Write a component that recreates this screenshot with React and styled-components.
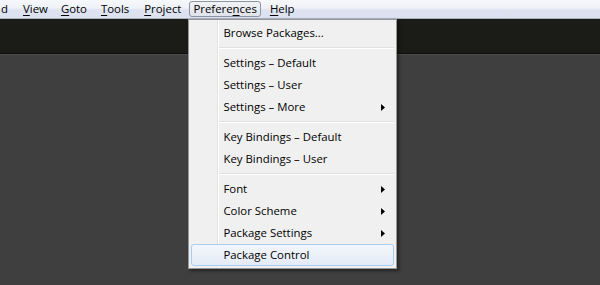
import React from "react";
import styled, { createGlobalStyle } from "styled-components";

const GlobalStyle = createGlobalStyle`
  html, body {
    margin: 0;
    padding: 0;
    overflow: hidden;
    background: #3e3e3e;
  }
  body {
    font-family: "Segoe UI", "Open Sans", "Noto Sans", sans-serif;
    font-size: 11.4px;
    color: #000;
  }
`;

const Window = styled.div`
  display: flex;
  flex-direction: column;
  width: 600px;
  height: 285px;
`;

const MenuBar = styled.div`
  position: relative;
  z-index: 2;
  display: flex;
  align-items: stretch;
  height: 19px;
  box-sizing: border-box;
  padding: 1px 0 1px 0;
  background: linear-gradient(#f7f8fb 0%, #eef1f7 45%, #dde3f0 55%, #dbe1ef 100%);
  border-bottom: 1px solid #a9b1c2;
`;

const MenuItem = styled.div`
  position: relative;
  display: flex;
  align-items: center;
  box-sizing: border-box;
  padding: 0 ${(p) => p.$pad ?? 5}px;
  margin-left: ${(p) => p.$gap ?? 1}px;
  border: 1px solid ${(p) => (p.$open ? "#8d95a3" : "transparent")};
  border-radius: 3px;
  background: ${(p) =>
    p.$open ? "linear-gradient(#f1f2f5, #dfe3ea)" : "transparent"};
  line-height: 14px;
  white-space: nowrap;
`;

const Key = styled.span`
  text-decoration: underline;
  text-underline-offset: 2px;
`;

const Toolbar = styled.div`
  height: 34px;
  background: #1b1c17;
  border-bottom: 1px solid #0e0e0c;
`;

const Editor = styled.div`
  flex: 1;
  background: #3f3f3f;
  border-top: 1px solid #4d4d4d;
`;

const Dropdown = styled.div`
  position: absolute;
  left: -2px;
  top: 17px;
  width: 209px;
  box-sizing: border-box;
  padding: 2px;
  border: 1px solid #979797;
  background: linear-gradient(
      to right,
      transparent 28px,
      #e2e3e3 28px,
      #e2e3e3 29px,
      #ffffff 29px,
      #ffffff 30px,
      transparent 30px
    ),
    #f0f0f0;
  box-shadow: 2px 2px 3px rgba(0, 0, 0, 0.45);
`;

const DropItem = styled.div`
  display: flex;
  align-items: center;
  justify-content: space-between;
  height: 22px;
  box-sizing: border-box;
  padding: 0 8px 0 31px;
  border: 1px solid ${(p) => (p.$active ? "#a9cdf3" : "transparent")};
  border-radius: 3px;
  background: ${(p) =>
    p.$active ? "linear-gradient(#f2f6fc, #e4ebf6)" : "transparent"};
  white-space: nowrap;
`;

const Separator = styled.div`
  height: 8px;
  margin-left: 28px;
  display: flex;
  flex-direction: column;
  justify-content: center;
  &::after {
    content: "";
    display: block;
    height: 1px;
    background: #e0e0e0;
    border-bottom: 1px solid #ffffff;
  }
`;

const Arrow = () => (
  <svg width="4" height="7" viewBox="0 0 4 7">
    <polygon points="0,0 4,3.5 0,7" fill="#000" />
  </svg>
);

const items = [
  { label: "Browse Packages..." },
  "sep",
  { label: "Settings \u2013 Default" },
  { label: "Settings \u2013 User" },
  { label: "Settings \u2013 More", sub: true },
  "sep",
  { label: "Key Bindings \u2013 Default" },
  { label: "Key Bindings \u2013 User" },
  "sep",
  { label: "Font", sub: true },
  { label: "Color Scheme", sub: true },
  { label: "Package Settings", sub: true },
  { label: "Package Control", active: true },
];

const App = () => {
  return (
    <Window>
      <GlobalStyle />
      <MenuBar>
        <MenuItem $pad={0} $gap={0}>d</MenuItem>
        <MenuItem $gap={8}>
          <Key>V</Key>iew
        </MenuItem>
        <MenuItem>
          <Key>G</Key>oto
        </MenuItem>
        <MenuItem $gap={2}>
          <Key>T</Key>ools
        </MenuItem>
        <MenuItem $gap={3}>
          <Key>P</Key>roject
        </MenuItem>
        <MenuItem $gap={2} $pad={3} $open>
          Prefere<Key>n</Key>ces
          <Dropdown>
            {items.map((it, i) =>
              it === "sep" ? (
                <Separator key={i} />
              ) : (
                <DropItem key={i} $active={it.active}>
                  <span>{it.label}</span>
                  {it.sub && <Arrow />}
                </DropItem>
              )
            )}
          </Dropdown>
        </MenuItem>
        <MenuItem $gap={3}>
          <Key>H</Key>elp
        </MenuItem>
      </MenuBar>
      <Toolbar />
      <Editor />
    </Window>
  );
};

export default App;
